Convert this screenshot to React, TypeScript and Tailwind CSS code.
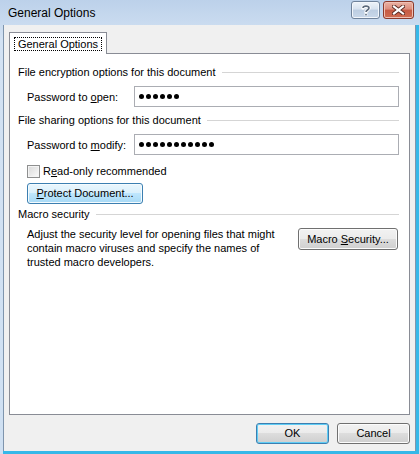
import type { ReactNode } from 'react';

const btn =
  'flex items-center justify-center rounded-[3px] border text-[11px] leading-none text-black whitespace-nowrap';
const btnNormal =
  'border-[#707070] bg-[linear-gradient(to_bottom,#f2f2f2_0%,#ebebeb_49%,#dddddd_50%,#cfcfcf_100%)] shadow-[inset_0_0_0_1px_#fcfcfc]';
const btnHot =
  'border-[#3c7fb1] bg-[linear-gradient(to_bottom,#eaf6fd_0%,#d9f0fc_49%,#bee6fd_50%,#a7d9f5_100%)] shadow-[inset_0_0_0_1px_#f4fbfe]';
const btnDefault =
  'border-[#3c7fb1] bg-[linear-gradient(to_bottom,#f2f2f2_0%,#ebebeb_49%,#dddddd_50%,#cfcfcf_100%)] shadow-[inset_0_0_0_1px_#60cdf5]';

function U({ children }: { children: ReactNode }) {
  return <span className="underline underline-offset-[1px] decoration-[1px]">{children}</span>;
}

function Heading({ children }: { children: ReactNode }) {
  return (
    <div className="flex items-center leading-[14px]">
      <span className="whitespace-nowrap">{children}</span>
      <div className="ml-[6px] h-px flex-1 bg-[#d5d5d5]" />
    </div>
  );
}

function Dots({ count }: { count: number }) {
  return (
    <div className="flex items-center gap-[2px] pl-[4px]">
      {Array.from({ length: count }).map((_, i) => (
        <span key={i} className="size-[5px] rounded-full bg-black" />
      ))}
    </div>
  );
}

function PasswordRow({ label, count }: { label: ReactNode; count: number }) {
  return (
    <div className="flex items-center pl-[9px]">
      <span className="w-[107px] whitespace-nowrap leading-[14px]">{label}</span>
      <div className="flex h-[21px] flex-1 items-center border border-[#abadb3] bg-white">
        <Dots count={count} />
      </div>
    </div>
  );
}

export default function App() {
  return (
    <div className="flex h-[454px] w-[420px] flex-col overflow-hidden bg-[linear-gradient(to_bottom,#bcd1ea_0%,#d3e2f3_40px,#cfe0f2_100%)] font-['Liberation_Sans',Arial,sans-serif] text-[11px] text-black">
      {/* title bar */}
      <div className="flex h-[25px] shrink-0 items-start">
        <span className="mt-[5px] whitespace-nowrap pl-[8px] text-[12px] leading-[16px] text-black">
          General Options
        </span>
        <div className="ml-auto mr-[6px] mt-[1px] flex gap-[3px]">
          <div className="flex h-[18px] w-[29px] items-center justify-center rounded-[3px] border border-[#6f829a] bg-[linear-gradient(to_bottom,#eef3f9_0%,#d7e2ef_45%,#bccde1_50%,#c9d8ea_100%)] shadow-[inset_0_0_0_1px_#f2f6fb]">
            <svg width="10" height="12" viewBox="0 0 10 12">
              <path
                d="M2 4 C2 1.5 8 1.5 8 4 C8 6 5 6 5 8"
                fill="none"
                stroke="#fff"
                strokeWidth="3.4"
                strokeLinecap="round"
              />
              <path
                d="M2 4 C2 1.5 8 1.5 8 4 C8 6 5 6 5 8"
                fill="none"
                stroke="#5d6b7d"
                strokeWidth="1.6"
              />
              <rect x="3.6" y="9.4" width="2.8" height="2.4" fill="#fff" />
              <rect x="4.2" y="9.9" width="1.6" height="1.5" fill="#5d6b7d" />
            </svg>
          </div>
          <div className="flex h-[18px] w-[31px] items-center justify-center rounded-[3px] border border-[#8b3a2b] bg-[linear-gradient(to_bottom,#eab3a5_0%,#dc8d7c_45%,#c65a43_50%,#cf6d52_100%)] shadow-[inset_0_0_0_1px_#efc0b4]">
            <svg width="13" height="10" viewBox="0 0 13 10">
              <path d="M2 1.5 L11 8.5 M11 1.5 L2 8.5" stroke="#5a2a22" strokeWidth="4" strokeLinecap="square" />
              <path d="M2 1.5 L11 8.5 M11 1.5 L2 8.5" stroke="#fff" strokeWidth="2.2" strokeLinecap="square" />
            </svg>
          </div>
        </div>
      </div>

      {/* client frame */}
      <div className="ml-[3px] mr-[1px] flex flex-1 flex-col border-b-[3px] border-r-[3px] border-[#36b8e8]">
        <div className="flex flex-1 flex-col border-l border-r border-[#7f95ad] bg-[#f0f0f0]">
          {/* tabs */}
          <div className="flex pl-[5px] pt-[7px]">
            <div className="relative z-10 -mb-px flex h-[22px] w-[98px] items-start justify-center border border-b-0 border-[#898c95] bg-white pt-[4px]">
              <span className="whitespace-nowrap border border-dotted border-black px-[3px] leading-[12px]">
                General Options
              </span>
            </div>
          </div>

          {/* panel */}
          <div className="mx-[5px] flex h-[362px] flex-col border border-[#898c95] bg-white pl-[8px] pr-[10px] pt-[11px]">
            <Heading>File encryption options for this document</Heading>
            <div className="mt-[7px]">
              <PasswordRow
                label={
                  <>
                    Password to <U>o</U>pen:
                  </>
                }
                count={6}
              />
            </div>
            <div className="mt-[6px]">
              <Heading>File sharing options for this document</Heading>
            </div>
            <div className="mt-[7px]">
              <PasswordRow
                label={
                  <>
                    Password to <U>m</U>odify:
                  </>
                }
                count={11}
              />
            </div>
            <div className="mt-[9px] flex items-center pl-[9px]">
              <span className="size-[13px] border border-[#8e8f8f] bg-[linear-gradient(135deg,#d8d8d8,#fbfbfb)] shadow-[inset_0_0_0_1px_#f4f4f4]" />
              <span className="ml-[3px] whitespace-nowrap leading-[14px]">
                R<U>e</U>ad-only recommended
              </span>
            </div>
            <div className="mt-[5px] pl-[9px]">
              <button className={`${btn} ${btnHot} h-[21px] w-[116px]`}>
                <span>
                  <U>P</U>rotect Document...
                </span>
              </button>
            </div>
            <div className="mt-[3px]">
              <Heading>Macro security</Heading>
            </div>
            <div className="mt-[6px] flex items-start">
              <p className="whitespace-nowrap pl-[9px] leading-[14px]">
                Adjust the security level for opening files that might
                <br />
                contain macro viruses and specify the names of
                <br />
                trusted macro developers.
              </p>
              <button className={`${btn} ${btnNormal} ml-auto mr-[1px] mt-[1px] h-[22px] w-[100px]`}>
                <span>
                  Macro <U>S</U>ecurity...
                </span>
              </button>
            </div>
          </div>

          {/* buttons */}
          <div className="mt-[8px] flex justify-end gap-[8px] pr-[5px]">
            <button className={`${btn} ${btnDefault} h-[21px] w-[73px]`}>OK</button>
            <button className={`${btn} ${btnNormal} h-[21px] w-[73px]`}>Cancel</button>
          </div>
        </div>
      </div>
    </div>
  );
}
